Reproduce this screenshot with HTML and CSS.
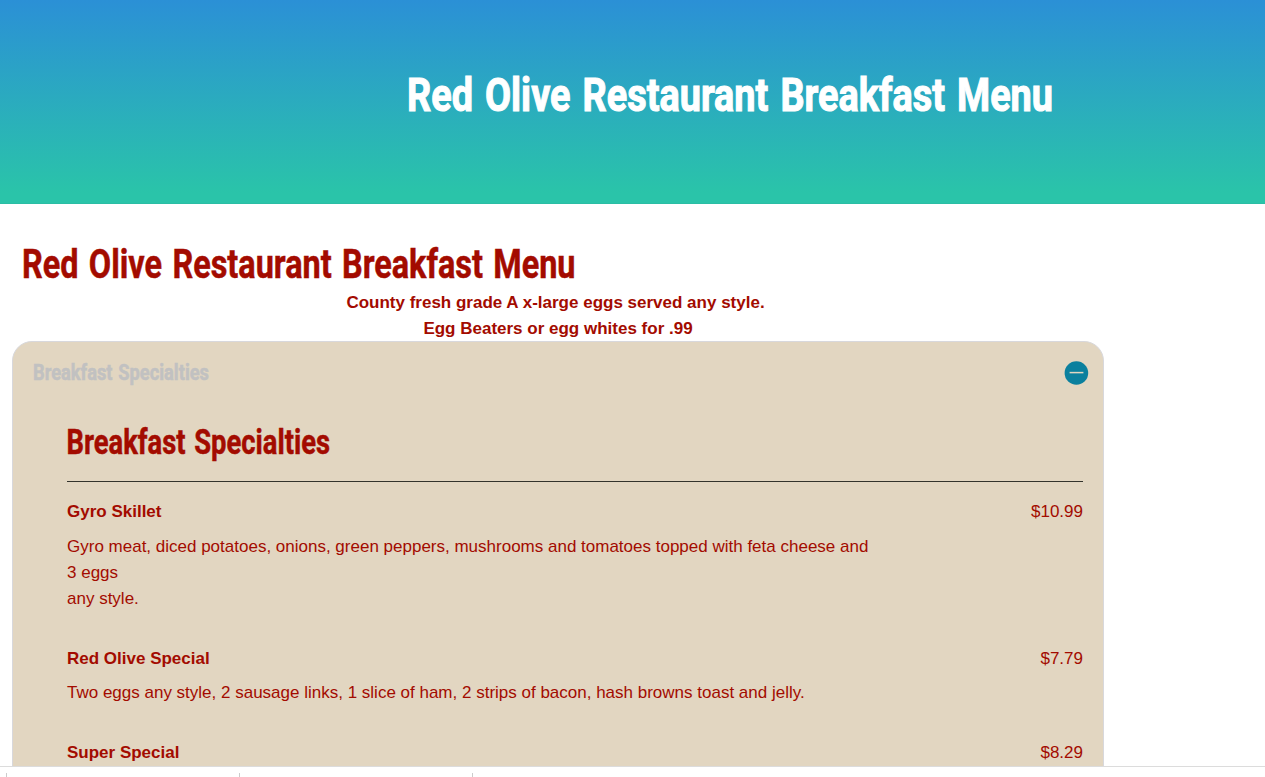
FILE: index.html
```html
<!DOCTYPE html>
<html lang="en">
<head>
<meta charset="utf-8">
<title>Red Olive Restaurant Breakfast Menu</title>
<link rel="stylesheet" href="styles.css">
</head>
<body>
<header class="hero">
  <h1 class="hero-title"><svg width="645" height="60"><text y="45" x="-2" textLength="646" lengthAdjust="spacingAndGlyphs">Red Olive Restaurant Breakfast Menu</text></svg></h1>
</header>
<main class="page">
  <h2 class="page-title"><svg width="560" height="50"><text y="39.5" x="-1" textLength="553.5" lengthAdjust="spacingAndGlyphs">Red Olive Restaurant Breakfast Menu</text></svg></h2>
  <p class="intro"><span>County fresh grade A x-large eggs served any style.</span><br><span class="intro-second">Egg Beaters or egg whites for .99</span></p>
  <section class="panel">
    <div class="panel-head">
      <h3 class="panel-label"><svg width="190" height="32"><text y="19" x="-1" textLength="176" lengthAdjust="spacingAndGlyphs">Breakfast Specialties</text></svg></h3>
      <svg class="toggle" width="24" height="24" viewBox="0 0 24 24"><circle cx="11.4" cy="12" r="11.8"/><path d="M4.6 11.6H18.4"/></svg>
    </div>
    <div class="panel-body">
      <h2 class="section-title"><svg width="280" height="50"><text y="36.5" x="-.5" textLength="263.5" lengthAdjust="spacingAndGlyphs">Breakfast Specialties</text></svg></h2>
      <article class="item">
        <div class="item-head"><strong>Gyro Skillet</strong><span>$10.99</span></div>
        <p class="desc">Gyro meat, diced potatoes, onions, green peppers, mushrooms and tomatoes topped with feta cheese and<br>3 eggs<br>any style.</p>
      </article>
      <article class="item">
        <div class="item-head"><strong>Red Olive Special</strong><span>$7.79</span></div>
        <p class="desc">Two eggs any style, 2 sausage links, 1 slice of ham, 2 strips of bacon, hash browns toast and jelly.</p>
      </article>
      <article class="item">
        <div class="item-head"><strong>Super Special</strong><span>$8.29</span></div>
      </article>
    </div>
  </section>
</main>
<footer class="bottom-bar"><i></i><i></i><i></i></footer>
</body>
</html>
```
FILE: styles.css
```css
* { box-sizing: border-box; }
body {
  margin: 0;
  height: 777px;
  overflow: hidden;
  display: flex;
  flex-direction: column;
  background: #fff;
  color: #a30b00;
  font: 17px/26.2px "Liberation Sans", Arial, sans-serif;
}
h1, h2, h3, p { margin: 0; }
svg { display: block; overflow: visible; }
svg text {
  font-family: Roboto, sans-serif;
  font-weight: 700;
  word-spacing: .07em;
  fill: currentColor;
  stroke: currentColor;
  stroke-width: .5px;
}
.hero {
  height: 204px;
  flex: none;
  padding: 66px 0 0 409px;
  background: linear-gradient(#2b90d6, #2ac4a9 95%);
  border-bottom: 1px solid #2bbda4;
  color: #fff;
}
.hero-title { font-size: 47px; }
.hero-title text { stroke-width: 1.1px; }
.page {
  height: 562px;
  flex: none;
  overflow: hidden;
  padding: 34px 0 0 12px;
}
.page-title { padding-left: 11px; font-size: 40.5px; height: 52px; }
.intro {
  width: 1087px;
  height: 51px;
  text-align: center;
  font-weight: 700;
}
.intro-second { padding-left: 5px; }
.panel {
  width: 1092px;
  height: 600px;
  background: #e2d6c1;
  border: 1px solid #d8d8dc;
  border-radius: 20px;
}
.panel-head {
  display: flex;
  justify-content: space-between;
  padding: 19px 14px 0 21px;
}
.panel-label { font-size: 22.5px; color: #c1c1c1; }
.toggle circle { fill: #0b809e; }
.toggle path { stroke: #e2d6c1; stroke-width: 1.5; }
.panel-body { padding: 24px 20px 0 54px; }
.section-title { height: 65px; border-bottom: 1px solid #33332c; font-size: 34.5px; }
.item { padding-top: 17px; margin-bottom: 16.5px; }
.item-head { display: flex; justify-content: space-between; }
.desc { padding-top: 8.4px; }
.bottom-bar {
  flex: 1;
  border-top: 1px solid #dcdcdc;
  display: flex;
  gap: 232px;
  padding: 6px 0 0 6px;
}
.bottom-bar i { width: 1px; background: #ccc; }
```
